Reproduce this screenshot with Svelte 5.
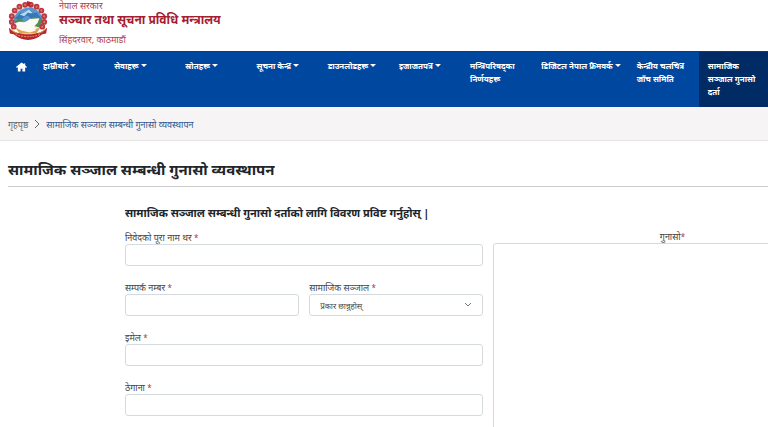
<script>
  const menu = [
    { title: 'हाम्रोबारे', dropdown: true },
    { title: 'सेवाहरू', dropdown: true },
    { title: 'स्रोतहरू', dropdown: true },
    { title: 'सूचना केन्द्र', dropdown: true },
    { title: 'डाउनलोडहरू', dropdown: true },
    { title: 'इजाजतपत्र', dropdown: true },
    { title: 'मन्त्रिपरिषद्का निर्णयहरू' },
    { title: 'डिजिटल नेपाल फ्रेमवर्क', dropdown: true },
    { title: 'केन्द्रीय चलचित्र जाँच समिति' },
    { title: 'सामाजिक सञ्जाल गुनासो दर्ता', active: true },
  ];

  // rhododendrons around the upper half of the emblem
  const flowers = [
    [7, 28], [5, 23], [5, 17], [8, 11], [13, 7], [19, 5],
    [25, 5], [31, 7], [36, 11], [39, 17], [39, 23], [37, 28],
  ];

  let name = $state('');
  let phone = $state('');
  let network = $state('');
  let email = $state('');
  let address = $state('');
  let complaint = $state('');
</script>

<div class="page">
  <header>
    <svg class="emblem" viewBox="0 0 44 44" aria-hidden="true">
      <circle cx="22" cy="21" r="16" fill="#f3e9e2" />
      <path d="M7 18 Q12 9 21 8 Q32 7 37 18 L37 25 L24 22 L8 25Z" fill="#5b97cf" />
      <path d="M8 20 L14 13 L17 15 L23 10 L28 14 L31 13 L37 21 L30 18 L26 20 L21 16 L15 20Z" fill="#3777b5" />
      <path d="M13 15 L17 14 L23 10 L27 14 L24 14 L22 13 L18 17Z" fill="#b9dcf2" />
      <path d="M26 18 Q32 16 37 22 L35 29 L28 27Z" fill="#4b8f55" />
      <path d="M8 22 L13 19 L17 21 L14 24 L9 26Z" fill="#4b8f55" />
      <path d="M8 25 Q13 21 18 24 L24 20 L34 19 L32 24 L28 28 L31 31 L14 33 L9 29Z" fill="#fbfaf5" />
      <path d="M9 29 L15 32 L22 33 L30 31 L35 28 L31 35 L13 35Z" fill="#dfa44f" />
      <path d="M15 32 L20 29 L23 31 L28 29 L30 32 L24 34Z" fill="#fff8ec" />
      {#each flowers as [x, y]}
        <circle cx={x} cy={y} r="3" fill="#bd3a40" />
        <circle cx={x} cy={y} r="1" fill="#d9807f" />
      {/each}
      <path d="M21 1 L27 3 L23 4 L27 6 L21 6Z" fill="#b51f32" />
      <path d="M2 29 Q7 34 14 35 Q22 37 30 35 Q37 34 42 29 L41 35 L37 36 Q30 42 22 42 Q14 42 7 36 L3 35Z" fill="#b8232e" />
      <path d="M9 36 Q22 41 35 36" fill="none" stroke="#e7b06a" stroke-dasharray="2 1" />
      <path d="M4 31 Q7 34 11 35 M40 31 Q37 34 33 35" fill="none" stroke="#d89a45" />
    </svg>
    <div class="ministry">
      <span>नेपाल सरकार</span>
      <strong>सञ्चार तथा सूचना प्रविधि मन्त्रालय</strong>
      <span>सिंहदरवार, काठमाडौं</span>
    </div>
  </header>

  <nav>
    <a class="home" href="#home" aria-label="गृहपृष्ठ">
      <svg viewBox="0 0 12 12"><path d="M6 1 L0 6 L1 7 L2 6 V11 H5 V8 H7 V11 H10 V6 L11 7 L12 6 L10 4 V2 H9 V3Z" fill="#fff" /></svg>
    </a>
    {#each menu as item}
      <a href="#menu" class:active={item.active} class:dropdown={item.dropdown}>{item.title}</a>
    {/each}
  </nav>

  <div class="breadcrumb">
    <a href="#home">गृहपृष्ठ</a>
    <svg viewBox="0 0 6 8"><path d="M1 0 L5 4 L1 8" fill="none" stroke="#666" /></svg>
    <a class="current" href="#complaint">सामाजिक सञ्जाल सम्बन्धी गुनासो व्यवस्थापन</a>
  </div>

  <main>
    <h1>सामाजिक सञ्जाल सम्बन्धी गुनासो व्यवस्थापन</h1>
    <div class="wrapper">
      <h2>सामाजिक सञ्जाल सम्बन्धी गुनासो दर्ताको लागि विवरण प्रविष्ट गर्नुहोस् |</h2>
      <form>
        <div class="fields">
          <div class="field wide">
            <label for="name">निवेदको पूरा नाम थर <i>*</i></label>
            <input id="name" type="text" bind:value={name} />
          </div>
          <div class="field">
            <label for="phone">सम्पर्क नम्बर <i>*</i></label>
            <input id="phone" type="tel" bind:value={phone} />
          </div>
          <div class="field">
            <label for="network">सामाजिक सञ्जाल <i>*</i></label>
            <div class="select">
              <select id="network" bind:value={network}>
                <option value="">प्रकार छान्नुहोस्</option>
              </select>
              <svg viewBox="0 0 8 6"><path d="M1 1 L4 4 L7 1" fill="none" stroke="#777" /></svg>
            </div>
          </div>
          <div class="field wide">
            <label for="email">इमेल <i>*</i></label>
            <input id="email" type="email" bind:value={email} />
          </div>
          <div class="field wide">
            <label for="address">ठेगाना <i>*</i></label>
            <input id="address" type="text" bind:value={address} />
          </div>
        </div>
        <div class="field message">
          <label for="message">गुनासो<i>*</i></label>
          <textarea id="message" bind:value={complaint}></textarea>
        </div>
      </form>
    </div>
  </main>
</div>

<style>
  :global(body) {
    margin: 0;
    background: #fff;
  }

  .page {
    font-family: "Noto Sans", "Noto Sans Devanagari", sans-serif;
    font-size: 9px;
    color: #444;
    overflow: hidden;
  }

  a {
    color: inherit;
    text-decoration: none;
  }

  header {
    box-sizing: border-box;
    display: flex;
    gap: 10px;
    height: 51px;
    padding-left: 7px;
  }

  .emblem {
    width: 42px;
    height: 42px;
  }

  .ministry {
    display: flex;
    flex-direction: column;
    color: #b0404a;
    line-height: 12px;
  }

  .ministry strong {
    margin-bottom: 6px;
    font-size: 12px;
    line-height: 16px;
    color: #a51c30;
  }

  /* the last item bleeds slightly over the right edge */
  nav {
    display: grid;
    grid-template-columns: 34px repeat(7, 1fr) auto 1fr 1fr;
    margin-right: -2px;
    border-top: 1px solid #003f8c;
    background: #00479f;
    color: #fff;
    font-size: 8px;
    font-weight: 700;
    line-height: 13px;
  }

  nav a {
    min-width: 0;
    padding: 7px 7px 9px 9px;
  }

  nav .dropdown {
    white-space: nowrap;
  }

  nav .dropdown::after {
    content: '';
    display: inline-block;
    margin-left: 2px;
    vertical-align: 2px;
    border-top: 3px solid #fff;
    border-left: 3px solid transparent;
    border-right: 3px solid transparent;
  }

  nav .active {
    background: #002b64;
  }

  nav .home {
    padding: 9px 0 0 16px;
  }

  .home svg {
    display: block;
    width: 11px;
    height: 12px;
  }

  .breadcrumb {
    display: flex;
    align-items: center;
    gap: 6px;
    height: 32px;
    padding: 1px 0 0 8px;
    border-bottom: 1px solid #e6e4e4;
    background: #f6f4f4;
    color: #666;
  }

  .breadcrumb svg {
    width: 6px;
    height: 8px;
  }

  .breadcrumb .current {
    color: #31578f;
  }

  main {
    padding-left: 8px;
  }

  h1 {
    margin: 0;
    padding: 18px 0 7px;
    border-bottom: 1px solid #ccc;
    font-size: 15px;
    line-height: 20px;
    color: #212529;
  }

  .wrapper {
    padding-left: 117px;
  }

  h2 {
    margin: 18px 0 10px;
    font-size: 11px;
    line-height: 16px;
    color: #212529;
  }

  /* the two halves run past the right edge of the wrapper */
  form {
    display: grid;
    grid-template-columns: 1fr 1fr;
    gap: 10px;
    width: 113%;
  }

  .fields {
    display: grid;
    grid-template-columns: 1fr 1fr;
    align-content: start;
    gap: 15px 10px;
  }

  .field {
    display: flex;
    flex-direction: column;
    min-width: 0;
  }

  .wide {
    grid-column: span 2;
  }

  label {
    line-height: 13px;
  }

  label i {
    color: #b8303f;
    font-size: 8px;
    font-style: normal;
  }

  input,
  select,
  textarea {
    box-sizing: border-box;
    width: 100%;
    border: 1px solid #d5dadd;
    border-radius: 3px;
    background: #fff;
    color: #444;
    font: inherit;
    font-size: 8px;
  }

  input,
  select {
    display: block;
    height: 22px;
    padding: 0 10px;
  }

  select {
    appearance: none;
  }

  .select {
    position: relative;
  }

  .select svg {
    position: absolute;
    top: 8px;
    right: 11px;
    width: 8px;
    height: 6px;
    pointer-events: none;
  }

  .message label {
    line-height: 12px;
    text-align: center;
  }

  textarea {
    display: block;
    height: 240px;
    resize: none;
  }
</style>
